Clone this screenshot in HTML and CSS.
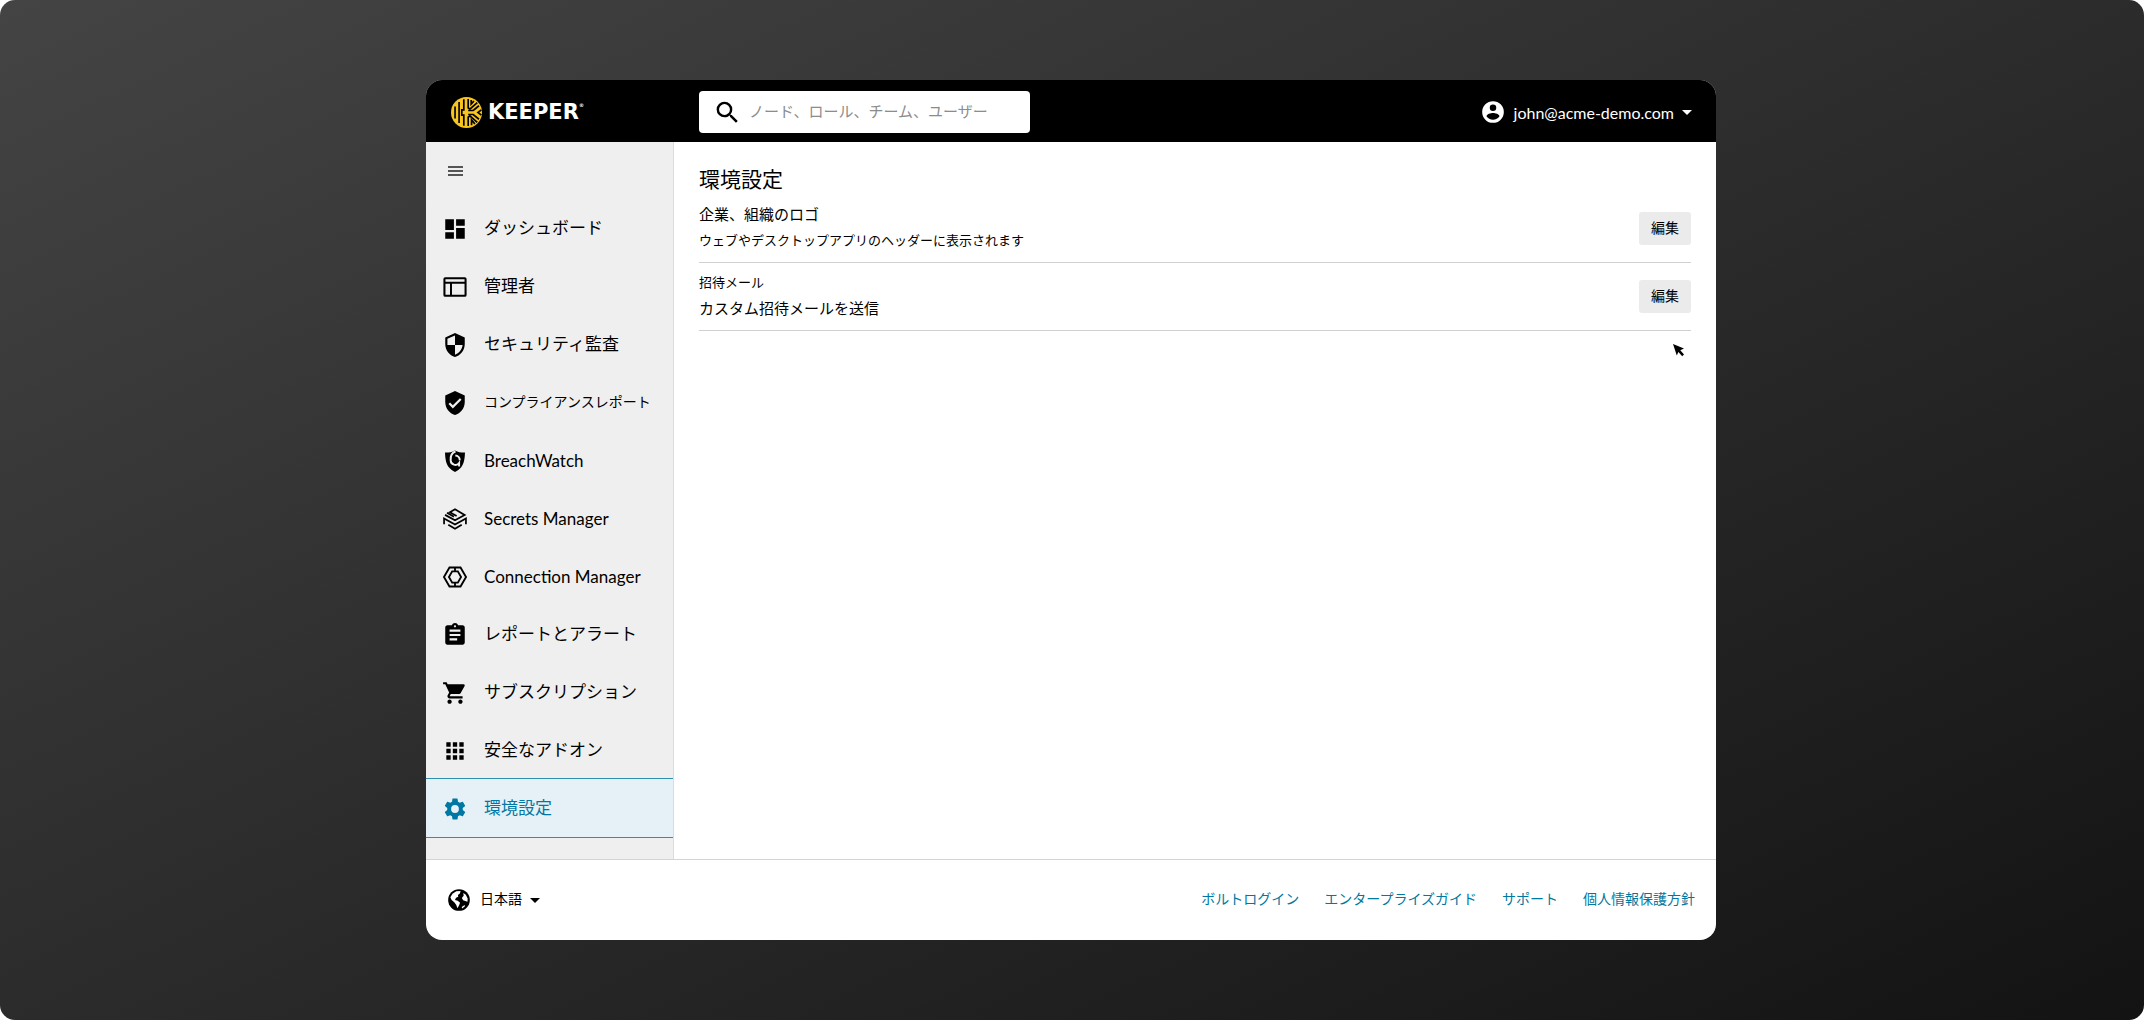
FILE: index.html
```html
<!DOCTYPE html>
<html lang="ja">
<head>
<meta charset="utf-8">
<meta name="viewport" content="width=device-width, initial-scale=1">
<title>環境設定 - Keeper</title>
<link rel="stylesheet" href="styles.css">
</head>
<body>
<div class="stage">
  <div class="window">
    <header class="topbar">
      <a class="brand" href="#">
        <svg class="brand-mark" viewBox="0 0 92 92" aria-hidden="true">
          <circle cx="46" cy="46" r="46" fill="#f8c51c"/>
          <g fill="none" stroke="#000" stroke-width="5">
            <path d="M12 28V64M24 15V77M38 7V38H32V54H38V85"/>
            <path d="M51 6V32L56 36L78 17M51 86V60L56 56L78 75"/>
            <path d="M60 9V21L68 12M61 84V68L71 80"/>
            <path d="M83 26L66 40H51M83 66L66 52H51M90 38L80 46L90 54"/>
          </g>
        </svg>
        <span class="brand-name">KEEPER<sup class="brand-reg">®</sup></span>
      </a>
      <label class="search">
        <svg class="search-icon" viewBox="0 0 24 24" aria-hidden="true"><path d="M15.5 14h-.79l-.28-.27A6.47 6.47 0 0 0 16 9.5 6.5 6.5 0 1 0 9.5 16c1.61 0 3.09-.59 4.23-1.57l.27.28v.79l5 4.99L20.49 19l-4.99-5zm-6 0a4.5 4.5 0 1 1 0-9 4.5 4.5 0 0 1 0 9z"/></svg>
        <input class="search-input" type="text" aria-label="検索" placeholder="ノード、ロール、チーム、ユーザー">
      </label>
      <button class="account" type="button">
        <svg class="icon" viewBox="0 0 24 24" aria-hidden="true"><path d="M12 2a10 10 0 1 0 0 20 10 10 0 0 0 0-20zm0 3a3 3 0 1 1 0 6 3 3 0 0 1 0-6zm0 14.2a7.2 7.2 0 0 1-6-3.22c.03-1.99 4-3.08 6-3.08 1.99 0 5.97 1.09 6 3.08a7.2 7.2 0 0 1-6 3.22z"/></svg>
        <span class="account-name">john@acme-demo.com</span>
        <svg class="caret" viewBox="0 0 10 5" aria-hidden="true"><path d="M0 0h10L5 5z"/></svg>
      </button>
    </header>
    <div class="body">
      <nav class="sidebar">
        <button class="menu-toggle" type="button" aria-label="メニュー">
          <svg class="menu-icon" viewBox="0 0 15 11" aria-hidden="true"><path d="M0 0h15v2H0zM0 4h15v2H0zM0 8h15v2H0z"/></svg>
        </button>
        <ul class="nav">
          <li><a class="nav-item" href="#"><svg class="icon" viewBox="0 0 24 24"><path d="M3 13h8V3H3v10zm0 8h8v-6H3v6zm10 0h8V11h-8v10zm0-18v6h8V3h-8z"/></svg><span class="nav-label">ダッシュボード</span></a></li>
          <li><a class="nav-item" href="#"><svg class="icon" viewBox="0 0 24 24"><path fill-rule="evenodd" d="M3 3h18a1.700 1.700 0 0 1 1.700 1.700v14.600a1.700 1.700 0 0 1-1.700 1.700H3a1.700 1.700 0 0 1-1.700-1.700V4.700A1.700 1.700 0 0 1 3 3zM3.200 4.900v2.300h17.600V4.900zM3.200 9.100V19.100h4.200V9.100zM9.200 9.100V19.100h11.600V9.100z"/></svg><span class="nav-label">管理者</span></a></li>
          <li><a class="nav-item" href="#"><svg class="icon" viewBox="0 0 24 24"><path d="M12 1 3 5v6c0 5.550 3.840 10.740 9 12 5.160-1.260 9-6.450 9-12V5l-9-4zm0 10.990h7c-.53 4.120-3.280 7.790-7 8.940V12H5V6.300l7-3.110v8.800z"/></svg><span class="nav-label">セキュリティ監査</span></a></li>
          <li><a class="nav-item" href="#"><svg class="icon" viewBox="0 0 24 24"><path d="M12 1 3 5v6c0 5.550 3.840 10.740 9 12 5.160-1.260 9-6.450 9-12V5l-9-4zm-2 16-4-4 1.410-1.410L10 14.170l6.590-6.590L18 9l-8 8z"/></svg><span class="nav-label nav-label-long">コンプライアンスレポート</span></a></li>
          <li><a class="nav-item" href="#"><svg class="icon" viewBox="0 0 24 24"><path d="M12 2.200C14.800 3.800 18 4.300 21.200 4.200 21 11 20 15 17.500 18c-1.500 1.800-3.300 3-5.500 4.200C9.800 21 8 19.800 6.500 18 4 15 3 11 2.800 4.200 6 4.300 9.200 3.800 12 2.200z"/><path fill="none" stroke="#efefef" stroke-width="1.800" d="M12.500 3.200C8.500 4.500 7.800 8.500 8 11.300A4.300 4.300 0 0 0 15.800 13.800V17M12.300 7A4.300 4.300 0 0 1 16.400 11.300"/></svg><span class="nav-label nav-label-latin">BreachWatch</span></a></li>
          <li><a class="nav-item" href="#"><svg class="icon" viewBox="0 0 24 24"><g fill="none" stroke="currentColor" stroke-width="1.600"><path d="M13.500 9.200 7.300 5.800 12 3.100 20.900 8.200 12 13.200 2.800 8.200M4.600 6.300 11 9.900"/><path d="M1.900 16.800V11.500L12 17.100 22.100 11.500V16.800"/><path d="M5.800 17.200 12 20.900 18.200 17.200"/></g></svg><span class="nav-label nav-label-latin">Secrets Manager</span></a></li>
          <li><a class="nav-item" href="#"><svg class="icon" viewBox="0 0 24 24"><g fill="none" stroke="currentColor" stroke-width="1.700"><path d="M6.900 3.200H17.100L22.200 12 17.100 20.800H6.900L1.800 12z"/><path d="M9.400 6.800H14.600L17.600 12 14.600 17.200H9.400L6.400 12zM12 3V6.800M12 17.200V21"/></g></svg><span class="nav-label nav-label-latin">Connection Manager</span></a></li>
          <li><a class="nav-item" href="#"><svg class="icon" viewBox="0 0 24 24"><path d="M19 3h-4.180C14.400 1.840 13.300 1 12 1c-1.300 0-2.400.84-2.820 2H5c-1.100 0-2 .9-2 2v14c0 1.100.9 2 2 2h14c1.100 0 2-.9 2-2V5c0-1.100-.9-2-2-2zm-7 0c.55 0 1 .45 1 1s-.45 1-1 1-1-.45-1-1 .45-1 1-1zm2 14H7v-2h7v2zm3-4H7v-2h10v2zm0-4H7V7h10v2z"/></svg><span class="nav-label">レポートとアラート</span></a></li>
          <li><a class="nav-item" href="#"><svg class="icon" viewBox="0 0 24 24"><path d="M7 18c-1.100 0-1.990.9-1.990 2S5.900 22 7 22s2-.9 2-2-.9-2-2-2zM1 2v2h2l3.600 7.590-1.350 2.450c-.16.280-.25.610-.25.960 0 1.100.9 2 2 2h12v-2H7.420c-.14 0-.25-.11-.25-.25l.03-.12.900-1.630h7.450c.75 0 1.410-.41 1.750-1.030l3.580-6.490A1 1 0 0 0 20 4H5.210l-.94-2H1zm16 16c-1.100 0-1.990.9-1.990 2s.89 2 1.990 2 2-.9 2-2-.9-2-2-2z"/></svg><span class="nav-label">サブスクリプション</span></a></li>
          <li><a class="nav-item" href="#"><svg class="icon" viewBox="0 0 24 24"><path d="M4 8h4V4H4v4zm6 12h4v-4h-4v4zm-6 0h4v-4H4v4zm0-6h4v-4H4v4zm6 0h4v-4h-4v4zm6-10v4h4V4h-4zm-6 4h4V4h-4v4zm6 6h4v-4h-4v4zm0 6h4v-4h-4v4z"/></svg><span class="nav-label">安全なアドオン</span></a></li>
          <li><a class="nav-item nav-item-active" href="#" aria-current="page"><svg class="icon" viewBox="0 0 24 24"><path d="M19.140 12.940c.04-.3.060-.61.060-.94 0-.32-.02-.64-.07-.94l2.030-1.580a.49.49 0 0 0 .12-.61l-1.920-3.320a.488.488 0 0 0-.59-.22l-2.390.96c-.5-.38-1.030-.7-1.620-.94l-.36-2.540a.484.484 0 0 0-.48-.41h-3.840c-.24 0-.43.170-.47.410l-.36 2.540c-.59.240-1.130.570-1.620.940l-2.390-.96c-.22-.08-.47 0-.59.220L2.740 8.870c-.12.210-.08.470.12.610l2.030 1.580c-.05.300-.09.630-.09.940s.02.640.070.940l-2.030 1.580a.49.49 0 0 0-.12.610l1.920 3.320c.12.220.37.290.59.220l2.390-.96c.5.380 1.030.700 1.620.940l.36 2.540c.05.240.24.410.48.410h3.840c.24 0 .44-.17.470-.41l.36-2.540c.59-.24 1.130-.56 1.620-.94l2.390.96c.22.080.47 0 .59-.22l1.920-3.320c.12-.22.070-.47-.12-.61l-2.010-1.580zM12 15.600A3.600 3.600 0 1 1 12 8.400a3.600 3.600 0 0 1 0 7.200z"/></svg><span class="nav-label">環境設定</span></a></li>
        </ul>
      </nav>
      <main class="content">
        <h1 class="page-title">環境設定</h1>
        <section class="setting">
          <div class="setting-text">
            <h2 class="text-large">企業、組織のロゴ</h2>
            <p class="text-small">ウェブやデスクトップアプリのヘッダーに表示されます</p>
          </div>
          <button class="edit" type="button">編集</button>
        </section>
        <section class="setting">
          <div class="setting-text">
            <h2 class="text-small">招待メール</h2>
            <p class="text-large">カスタム招待メールを送信</p>
          </div>
          <button class="edit" type="button">編集</button>
        </section>
        <svg class="cursor" viewBox="0 0 12 14" aria-hidden="true"><path d="M0 0 11 4.500 7.300 6.300 11 10.500 9.200 12.200 5.400 8 3.800 11.500z"/></svg>
      </main>
    </div>
    <footer class="footer">
      <label class="language">
        <svg class="icon" viewBox="0 0 24 24" aria-hidden="true"><circle cx="12" cy="12" r="10"/><path fill="#fff" d="M6 6.200 9.500 4 13.500 3.800 12.800 6 11 7.300 11.300 9 9.300 10 8.300 12 10.800 12.800 13 14.500 12 17 10.500 19.500 9.500 16.500 7.800 14.200 5.200 12 4 9.500zM16 5.500 18.300 7.200 20 10.500 19.800 13.500 17.800 13 15.800 12.300 14.600 10.200 16.300 8zM14.500 18.500 17.200 16.500 17.500 17.800 15 19.800z"/></svg>
        <select class="language-select" aria-label="言語"><option>日本語</option></select>
        <svg class="caret" viewBox="0 0 10 5" aria-hidden="true"><path d="M0 0h10L5 5z"/></svg>
      </label>
      <div class="links">
        <a href="#">ボルトログイン</a>
        <a href="#">エンタープライズガイド</a>
        <a href="#">サポート</a>
        <a href="#">個人情報保護方針</a>
      </div>
    </footer>
  </div>
</div>
</body>
</html>
```
FILE: styles.css
```css
* {
  box-sizing: border-box;
}

body {
  margin: 0;
  background: #fff;
  color: #000;
  font-family: "Noto Sans CJK JP", sans-serif;
  font-size: 14px;
}

h1,
h2,
p,
ul {
  margin: 0;
  padding: 0;
  font-weight: 400;
}

ul {
  list-style: none;
}

a {
  text-decoration: none;
}

button,
input,
select {
  padding: 0;
  border: 0;
  background: none;
  color: inherit;
  font: inherit;
}

svg {
  display: block;
  flex: none;
  fill: currentColor;
}

.stage {
  display: flex;
  justify-content: center;
  min-height: 100vh;
  padding: 80px 26px 80px 24px;
  border-radius: 15px;
  background: linear-gradient(to bottom right, #444, #131313);
}

.window {
  display: flex;
  flex-direction: column;
  width: 100%;
  max-width: 1290px;
  border-radius: 16px;
  background: #fff;
  overflow: hidden;
}

.icon {
  width: 26px;
  height: 26px;
}

.caret {
  width: 10px;
  height: 5px;
}

/* Top bar */

.topbar {
  display: flex;
  align-items: center;
  height: 62px;
  padding: 2px 24px 0 25px;
  background: #000;
  color: #fff;
}

.brand {
  display: flex;
  align-items: center;
  gap: 6px;
  width: 248px;
  color: #fff;
}

.brand-mark {
  width: 31px;
  height: 31px;
}

.brand-name {
  font-family: "DejaVu Sans", sans-serif;
  font-size: 21px;
  font-weight: 700;
  line-height: 30px;
}

.brand-reg {
  font-size: 5px;
  line-height: 0;
  vertical-align: 12px;
}

.search {
  display: flex;
  align-items: center;
  gap: 7px;
  width: 331px;
  height: 42px;
  padding: 0 14px;
  border-radius: 4px;
  background: #fff;
  color: #000;
}

.search-icon {
  width: 29px;
  height: 29px;
}

.search-input {
  flex: 1;
  min-width: 0;
  padding-bottom: 4px;
  outline: 0;
  font-size: 15px;
}

.search-input::placeholder {
  color: #8c8c8c;
  opacity: 1;
}

.account {
  display: flex;
  align-items: center;
  gap: 8px;
  margin-left: auto;
}

.account-name {
  font-family: Lato, sans-serif;
  font-size: 16px;
}

/* Sidebar */

.body {
  display: flex;
  flex: 1;
}

.sidebar {
  flex: none;
  width: 248px;
  border-right: 1px solid #dcdcdc;
  background: #efefef;
}

.menu-toggle {
  display: flex;
  align-items: center;
  height: 57px;
  padding: 2px 0 0 22px;
  color: #555;
}

.menu-icon {
  width: 15px;
  height: 11px;
}

.nav-item {
  display: flex;
  align-items: center;
  gap: 16px;
  height: 58px;
  padding: 2px 0 0 16px;
  color: #000;
}

.nav-label {
  padding-bottom: 5px;
  font-size: 17px;
}

.nav-label-long {
  font-size: 14px;
}

.nav-label-latin {
  padding-bottom: 2px;
  font-family: Lato, sans-serif;
}

.nav-item-active {
  background: #e6f0f7;
  box-shadow: 0 -1px #2e8fb0, 0 1px #2e8fb0;
  color: #0078a3;
}

/* Settings */

.content {
  position: relative;
  flex: 1;
  min-width: 0;
  padding: 20px 25px;
}

.page-title {
  padding-bottom: 1px;
  font-size: 21px;
  line-height: 32px;
}

.setting {
  display: flex;
  align-items: center;
  justify-content: space-between;
  height: 68px;
  border-bottom: 1px solid #d0d0d0;
}

.setting-text {
  padding-bottom: 4px;
}

.text-large,
.text-small {
  line-height: 26px;
}

.text-large {
  font-size: 15px;
}

.text-small {
  font-size: 13px;
}

.edit {
  height: 33px;
  padding: 0 12px 3px;
  border-radius: 3px;
  background: #ebebeb;
  line-height: 30px;
}

.cursor {
  position: absolute;
  top: 202px;
  right: 31px;
  width: 12px;
  height: 14px;
}

/* Footer */

.footer {
  display: flex;
  align-items: center;
  justify-content: space-between;
  height: 81px;
  padding: 0 21px 0 20px;
  border-top: 1px solid #d4d4d4;
}

.language {
  display: flex;
  align-items: center;
  gap: 8px;
}

.language-select {
  padding-bottom: 4px;
  appearance: none;
  outline: 0;
}

.links {
  display: flex;
  gap: 25px;
  padding-bottom: 4px;
}

.links a {
  color: #00789f;
}
```
